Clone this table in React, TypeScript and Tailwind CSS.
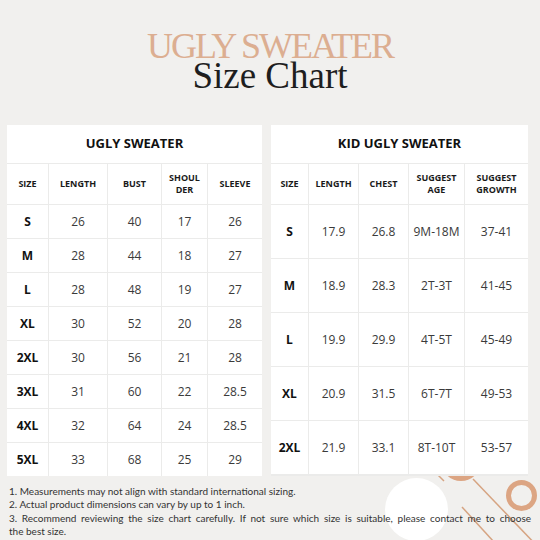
import React from "react";

const adult = {
  title: "UGLY SWEATER",
  heads: ["SIZE", "LENGTH", "BUST", "SHOUL\nDER", "SLEEVE"],
  rows: [
    ["S", "26", "40", "17", "26"],
    ["M", "28", "44", "18", "27"],
    ["L", "28", "48", "19", "27"],
    ["XL", "30", "52", "20", "28"],
    ["2XL", "30", "56", "21", "28"],
    ["3XL", "31", "60", "22", "28.5"],
    ["4XL", "32", "64", "24", "28.5"],
    ["5XL", "33", "68", "25", "29"],
  ],
};

const kid = {
  title: "KID UGLY SWEATER",
  heads: ["SIZE", "LENGTH", "CHEST", "SUGGEST\nAGE", "SUGGEST\nGROWTH"],
  rows: [
    ["S", "17.9", "26.8", "9M-18M", "37-41"],
    ["M", "18.9", "28.3", "2T-3T", "41-45"],
    ["L", "19.9", "29.9", "4T-5T", "45-49"],
    ["XL", "20.9", "31.5", "6T-7T", "49-53"],
    ["2XL", "21.9", "33.1", "8T-10T", "53-57"],
  ],
};

type Chart = { title: string; heads: string[]; rows: string[][] };

const Table = ({ data, cols, rows, width }: { data: Chart; cols: string; rows: string; width: string }) => (
  <div className={`grid ${cols} ${rows} ${width} gap-px bg-[#ebebea] relative z-10`}>
    <div className="col-span-5 bg-white flex items-center justify-center text-[13px] font-bold text-[#111]">
      {data.title}
    </div>
    {data.heads.map((h) => (
      <div
        key={h}
        className="bg-white flex items-center justify-center text-center whitespace-pre-line text-[9px] leading-[12px] font-bold text-[#1a1a1a]"
      >
        {h}
      </div>
    ))}
    {data.rows.map((r) =>
      r.map((c, i) => (
        <div
          key={r[0] + i}
          className={
            i === 0
              ? "bg-white flex items-center justify-center text-[12px] font-bold text-[#111]"
              : "bg-white flex items-center justify-center text-[12px] text-[#3a3a3a]"
          }
        >
          {c}
        </div>
      ))
    )}
  </div>
);

export default function App() {
  return (
    <div className="relative w-[540px] h-[540px] overflow-hidden bg-[#f1f0ee] font-['Open_Sans',sans-serif]">
      {/* decorations */}
      <div className="absolute left-[441px] top-[441px] w-[40px] h-[40px] rounded-full bg-[#dca583]" />
      <div className="absolute left-[385px] top-[478px] w-[63px] h-[63px] rounded-full bg-white" />
      <div className="absolute left-[506px] top-[480px] w-[31px] h-[31px] rounded-full border-[5px] border-[#dca583]" />
      <svg className="absolute left-0 top-0" width="540" height="540">
        <line x1="430" y1="467" x2="444" y2="481" stroke="#d6a482" strokeWidth="1.5" />
        <line x1="473" y1="479" x2="540" y2="549" stroke="#d6a482" strokeWidth="1.5" />
        <line x1="462" y1="507" x2="494" y2="542" stroke="#d6a482" strokeWidth="1.5" />
      </svg>

      <div className="relative flex flex-col items-center pt-[31px]">
        <div className="font-['Liberation_Serif',serif] text-[36px] leading-[30px] tracking-[-2px] text-[#dcae91]">
          UGLY SWEATER
        </div>
        <div className="font-['Liberation_Serif',serif] text-[37px] leading-[30px] text-[#1e1e1e]">
          Size Chart
        </div>
      </div>

      <div className="flex gap-[9px] pl-[7px] mt-[34px]">
        <Table
          data={adult}
          width="w-[255px]"
          cols="grid-cols-[41px_58px_53px_45px_54px]"
          rows="grid-rows-[38px_40px_repeat(8,33px)]"
        />
        <Table
          data={kid}
          width="w-[257px]"
          cols="grid-cols-[37px_49px_49px_55px_63px]"
          rows="grid-rows-[38px_40px_repeat(5,53px)]"
        />
      </div>

      <div className="relative px-[9px] pt-[9px] text-[10px] leading-[13.3px] text-[#333] font-['Lato',sans-serif]">
        <p>1. Measurements may not align with standard international sizing.</p>
        <p>2. Actual product dimensions can vary by up to 1 inch.</p>
        <p className="text-justify [text-align-last:justify]">
          3. Recommend reviewing the size chart carefully. If not sure which size is suitable, please contact me to choose
        </p>
        <p>the best size.</p>
      </div>
    </div>
  );
}
